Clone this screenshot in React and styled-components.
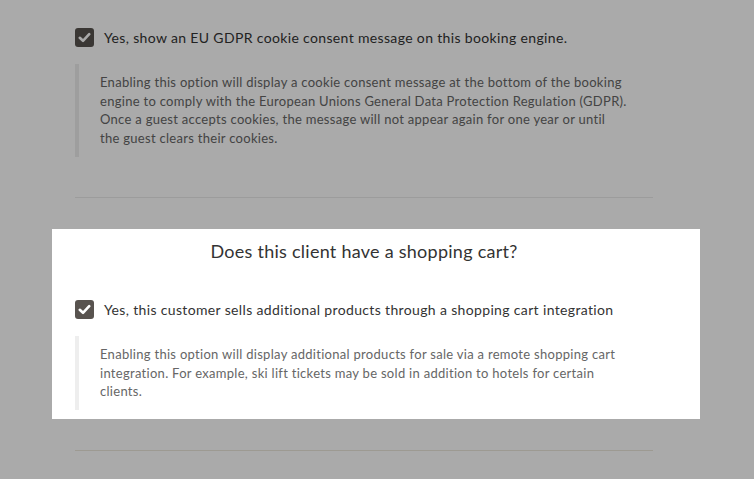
import React from "react";
import styled, { createGlobalStyle } from "styled-components";

const Global = createGlobalStyle`
  html, body { margin: 0; padding: 0; background: #ffffff; overflow: hidden; }
  body { font-family: "Lato", "Noto Sans", sans-serif; width: 754px; height: 479px; }
`;

const Page = styled.div`
  width: 578px;
  margin-left: 75px;
  padding-top: 28px;
`;

const Section = styled.section`
  display: flex;
  flex-direction: column;
`;

const Spacer = styled.div`
  height: ${(p) => p.$h}px;
`;

const Spotlight = styled.section`
  position: relative;
  z-index: 1;
  display: flex;
  flex-direction: column;
  background: #ffffff;
  margin: 0 -47px 0 -23px;
  padding: 10px 47px 9px 23px;
  box-shadow: 0 0 0 3000px rgba(0, 0, 0, 0.333);
`;

const Title = styled.h2`
  margin: 0 0 37px;
  font-size: 18px;
  font-weight: 400;
  line-height: 24px;
  letter-spacing: 0.26px;
  color: #333333;
  text-align: center;
`;

const CheckRow = styled.label`
  display: flex;
  align-items: center;
  gap: 10px;
  height: 19px;
  font-size: 14px;
  letter-spacing: 0.35px;
  color: #333333;
`;

const Box = styled.span`
  width: 19px;
  height: 19px;
  border-radius: 3px;
  background: #58534f;
  display: flex;
  align-items: center;
  justify-content: center;
  flex: none;
`;

const Quote = styled.blockquote`
  margin: 17px 0 0;
  border-left: 4px solid #eeeeee;
  padding: 9px 0 9px 21px;
  max-width: 553px;
  font-size: 13px;
  line-height: 18.7px;
  letter-spacing: 0.29px;
  color: #666666;
`;

const Divider = styled.hr`
  margin: ${(p) => p.$top}px 0 0;
  border: 0;
  border-top: 1px solid ${(p) => p.$color};
  height: 0;
`;

const Check = () => (
  <Box>
    <svg width="13" height="11" viewBox="0 0 13 11">
      <path d="M1.8 5.8 L5 8.8 L11.2 2.2" fill="none" stroke="#fff" strokeWidth="2.6" strokeLinecap="round" strokeLinejoin="round" />
    </svg>
  </Box>
);

export default function App() {
  return (
    <>
      <Global />
      <Page>
        <Section>
          <CheckRow>
            <Check />
            Yes, show an EU GDPR cookie consent message on this booking engine.
          </CheckRow>
          <Quote>
            Enabling this option will display a cookie consent message at the bottom of the booking<br />
            engine to comply with the European Unions General Data Protection Regulation (GDPR).<br />
            Once a guest accepts cookies, the message will not appear again for one year or until<br />
            the guest clears their cookies.
          </Quote>
        </Section>
        <Divider $top={40} $color="#eaeaea" />
        <Spacer $h={31} />
        <Spotlight>
          <Title>Does this client have a shopping cart?</Title>
          <CheckRow>
            <Check />
            Yes, this customer sells additional products through a shopping cart integration
          </CheckRow>
          <Quote>
            Enabling this option will display additional products for sale via a remote shopping cart<br />
            integration. For example, ski lift tickets may be sold in addition to hotels for certain<br />
            clients.
          </Quote>
        </Spotlight>
        <Divider $top={31} $color="#ece8dc" />
      </Page>
    </>
  );
}
